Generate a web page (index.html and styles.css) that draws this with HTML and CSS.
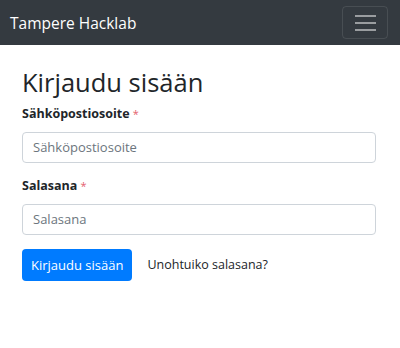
FILE: index.html
```html
<!DOCTYPE html>
<html lang="fi">
<head>
  <meta charset="UTF-8">
  <meta name="viewport" content="width=device-width, initial-scale=1.0">
  <title>Kirjaudu sisään - Tampere Hacklab</title>
  <link rel="stylesheet" href="styles.css">
</head>
<body>
  <nav class="navbar">
    <a class="navbar-brand" href="#">Tampere Hacklab</a>
    <button class="navbar-toggler" type="button" aria-label="Valikko">
      <span class="toggler-icon"></span>
    </button>
  </nav>

  <div class="container">
    <h2>Kirjaudu sisään</h2>
    <form>
      <div class="form-group">
        <label for="email">Sähköpostiosoite <span class="required">*</span></label>
        <input class="form-control" type="email" id="email" placeholder="Sähköpostiosoite">
      </div>
      <div class="form-group">
        <label for="password">Salasana <span class="required">*</span></label>
        <input class="form-control" type="password" id="password" placeholder="Salasana">
      </div>
      <div class="actions">
        <button class="btn btn-primary" type="submit">Kirjaudu sisään</button>
        <a class="btn-link" href="#">Unohtuiko salasana?</a>
      </div>
    </form>
  </div>
</body>
</html>
```

FILE: styles.css
```css
body {
  margin: 0;
  font-family: "Open Sans", "Noto Sans", sans-serif;
  color: #212529;
  background-color: #fff;
}
.navbar {
  background-color: #343a40;
  height: 45px;
  display: flex;
  align-items: center;
  justify-content: space-between;
  padding: 0 12px 0 10px;
}
.navbar-brand {
  color: #fff;
  font-size: 15.5px;
  text-decoration: none;
}
.navbar-toggler {
  width: 46px;
  height: 33px;
  background: transparent;
  border: 1px solid rgba(255, 255, 255, 0.1);
  border-radius: 4px;
  display: flex;
  align-items: center;
  justify-content: center;
  padding: 0;
}
.toggler-icon {
  display: block;
  width: 21px;
  height: 2px;
  background-color: rgba(255, 255, 255, 0.5);
  box-shadow: 0 -7px 0 rgba(255, 255, 255, 0.5), 0 7px 0 rgba(255, 255, 255, 0.5);
}
.container {
  padding: 0 24px 0 22px;
}
h2 {
  font-size: 25.5px;
  font-weight: 500;
  margin: 22px 0 7px;
  line-height: 1.2;
}
.form-group {
  margin-bottom: 14px;
}
label {
  display: block;
  font-weight: 700;
  font-size: 12.5px;
  margin-bottom: 10px;
}
.required {
  color: #e4606d;
  font-size: 11px;
  font-weight: 400;
}
.form-control {
  display: block;
  box-sizing: border-box;
  width: 100%;
  height: 31px;
  padding: 4px 10px;
  font-family: inherit;
  font-size: 13px;
  color: #495057;
  border: 1px solid #ced4da;
  border-radius: 4px;
}
.form-control::placeholder {
  color: #6c757d;
}
.actions {
  display: flex;
  align-items: center;
  gap: 15px;
  margin-top: 13px;
}
.btn {
  font-family: inherit;
  font-size: 13px;
  height: 32px;
  padding: 0 8px;
  border: 1px solid transparent;
  border-radius: 4px;
  cursor: pointer;
}
.btn-primary {
  background-color: #007bff;
  color: #fff;
}
.btn-link {
  color: #212529;
  font-size: 12.5px;
  text-decoration: none;
}
```
